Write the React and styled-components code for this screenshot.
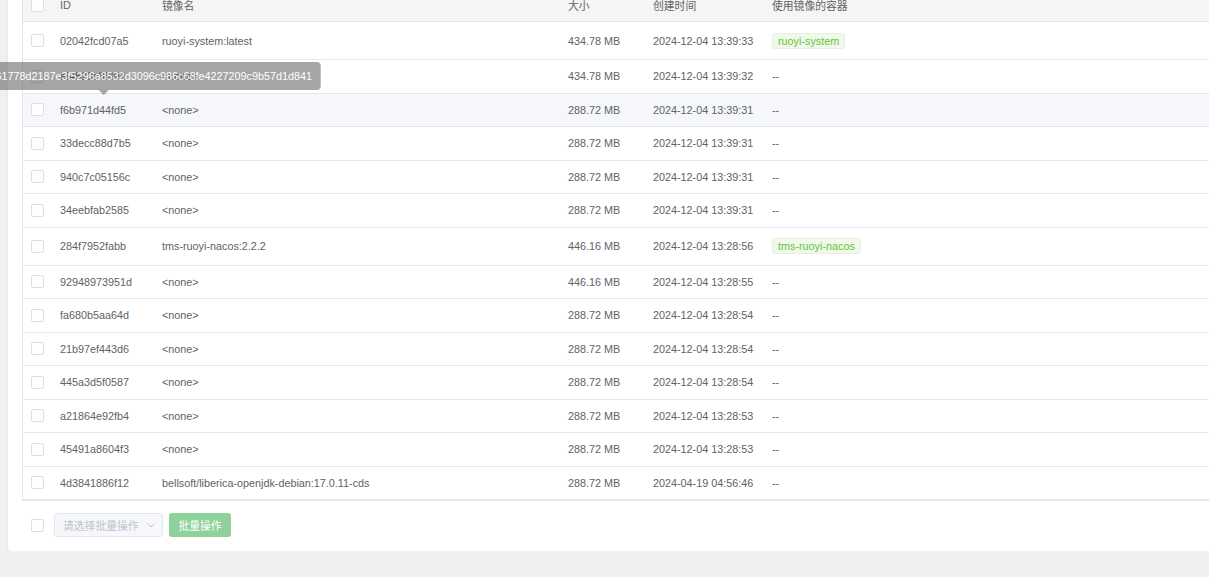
import React from "react";
import styled, { createGlobalStyle } from "styled-components";

const Global = createGlobalStyle`
  html, body { margin: 0; padding: 0; background: #f0f0f0; overflow: hidden; }
  body { font-family: "Liberation Sans", "Noto Sans CJK SC", sans-serif; font-size: 10.8px; color: #606266; }
`;

const Page = styled.div`
  padding: 0 0 0 8px;
  width: 1240px;
`;

const Card = styled.div`
  margin-top: -25px;
  background: #fff;
  border-radius: 4px;
  box-shadow: 0 1px 3px rgba(0, 0, 0, 0.06);
  padding: 14px;
`;

const Table = styled.div`
  position: relative;
  border-left: 1px solid #e4e7ed;
  border-bottom: 1px solid #e4e7ed;
`;

const Row = styled.div`
  display: grid;
  grid-template-columns: 37px 102px 406px 85px 119px 1fr;
  align-items: center;
  box-sizing: border-box;
  height: ${(p) => p.$h}px;
  border-bottom: 1px solid #e4e7ed;
  background: ${(p) => (p.$head ? "#f5f5f5" : p.$hover ? "#f5f7fa" : "#fff")};
  &:last-child { border-bottom: none; }
`;

const Cell = styled.div`
  white-space: nowrap;
  color: ${(p) => (p.$head ? "#5f6266" : "#606266")};
  padding-left: ${(p) => (p.$box ? "8px" : "0")};
  display: flex;
  align-items: center;
`;

const Check = styled.span`
  display: inline-block;
  width: 13px;
  height: 13px;
  box-sizing: border-box;
  border: 1px solid #dcdfe6;
  border-radius: 2px;
  background: #fff;
`;

const Tag = styled.span`
  display: inline-block;
  height: 16px;
  line-height: 14px;
  box-sizing: border-box;
  padding: 0 5px;
  border: 1px solid #e1f3d8;
  background: #f0f9eb;
  color: #67c23a;
  border-radius: 3px;
  font-size: 10.8px;
`;

const Tooltip = styled.div`
  position: absolute;
  left: 298px;
  top: 73px;
  transform: translateX(-100%);
  height: 28px;
  line-height: 28px;
  padding: 0 9px;
  white-space: nowrap;
  background: rgba(75, 75, 75, 0.5);
  color: #fff;
  font-size: 10.8px;
  border-radius: 4px;
  &::after {
    content: "";
    position: absolute;
    right: 212px;
    bottom: -5px;
    border-left: 5px solid transparent;
    border-right: 5px solid transparent;
    border-top: 5px solid rgba(75, 75, 75, 0.5);
  }
`;

const Footer = styled.div`
  display: flex;
  align-items: center;
  margin-top: 12px;
  padding-left: 9px;
  height: 24px;
`;

const Select = styled.div`
  margin-left: 10px;
  width: 109px;
  height: 24px;
  box-sizing: border-box;
  border: 1px solid #e4e7ed;
  border-radius: 3px;
  background: #f5f7fa;
  color: #c0c4cc;
  display: flex;
  align-items: center;
  justify-content: space-between;
  padding: 0 6px 0 8px;
  font-size: 10.8px;
`;

const Button = styled.div`
  margin-left: 6px;
  height: 24px;
  width: 62px;
  box-sizing: border-box;
  border-radius: 3px;
  background: #8ed19b;
  color: #fff;
  display: flex;
  align-items: center;
  justify-content: center;
  font-size: 10.8px;
`;

const rows = [
  ["02042fcd07a5", "ruoyi-system:latest", "434.78 MB", "2024-12-04 13:39:33", "ruoyi-system"],
  ["ef4529c8f892", "<none>", "434.78 MB", "2024-12-04 13:39:32", null],
  ["f6b971d44fd5", "<none>", "288.72 MB", "2024-12-04 13:39:31", null, true],
  ["33decc88d7b5", "<none>", "288.72 MB", "2024-12-04 13:39:31", null],
  ["940c7c05156c", "<none>", "288.72 MB", "2024-12-04 13:39:31", null],
  ["34eebfab2585", "<none>", "288.72 MB", "2024-12-04 13:39:31", null],
  ["284f7952fabb", "tms-ruoyi-nacos:2.2.2", "446.16 MB", "2024-12-04 13:28:56", "tms-ruoyi-nacos"],
  ["92948973951d", "<none>", "446.16 MB", "2024-12-04 13:28:55", null],
  ["fa680b5aa64d", "<none>", "288.72 MB", "2024-12-04 13:28:54", null],
  ["21b97ef443d6", "<none>", "288.72 MB", "2024-12-04 13:28:54", null],
  ["445a3d5f0587", "<none>", "288.72 MB", "2024-12-04 13:28:54", null],
  ["a21864e92fb4", "<none>", "288.72 MB", "2024-12-04 13:28:53", null],
  ["45491a8604f3", "<none>", "288.72 MB", "2024-12-04 13:28:53", null],
  ["4d3841886f12", "bellsoft/liberica-openjdk-debian:17.0.11-cds", "288.72 MB", "2024-04-19 04:56:46", null],
];

const Chevron = () => (
  <svg width="10" height="10" viewBox="0 0 10 10" fill="none">
    <path d="M1.5 3.5 L5 7 L8.5 3.5" stroke="#c0c4cc" strokeWidth="1" />
  </svg>
);

export default function App() {
  return (
    <Page>
      <Global />
      <Card>
        <Table>
          <Row $head $h={33}>
            <Cell $box><Check /></Cell>
            <Cell $head>ID</Cell>
            <Cell $head>镜像名</Cell>
            <Cell $head>大小</Cell>
            <Cell $head>创建时间</Cell>
            <Cell $head>使用镜像的容器</Cell>
          </Row>
          {rows.map((r) => (
            <Row key={r[0]} $h={r[4] ? 38 : 33.5} $hover={r[5]}>
              <Cell $box><Check /></Cell>
              <Cell>{r[0]}</Cell>
              <Cell>{r[1]}</Cell>
              <Cell>{r[2]}</Cell>
              <Cell>{r[3]}</Cell>
              <Cell>{r[4] ? <Tag>{r[4]}</Tag> : "--"}</Cell>
            </Row>
          ))}
          <Tooltip>sha256:a9c0e4b3f261778d2187e3f5296a8532d3096c986c68fe4227209c9b57d1d841</Tooltip>
        </Table>
        <Footer>
          <Check />
          <Select>
            <span>请选择批量操作</span>
            <Chevron />
          </Select>
          <Button>批量操作</Button>
        </Footer>
      </Card>
    </Page>
  );
}
